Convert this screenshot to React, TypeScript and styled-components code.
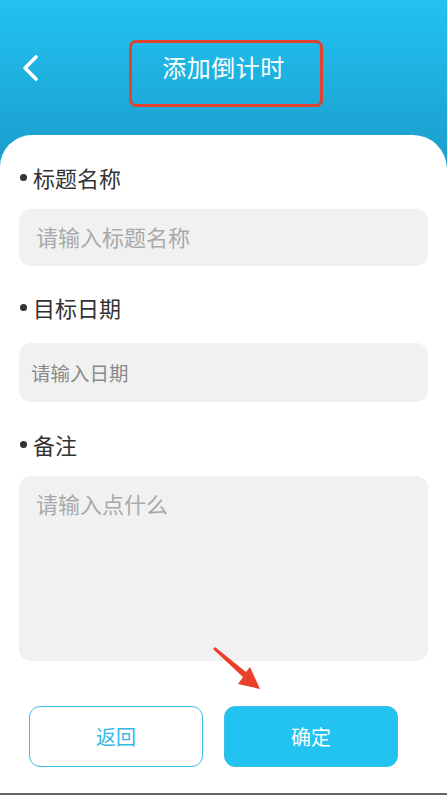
import React from "react";
import styled, { createGlobalStyle } from "styled-components";

const GlobalStyle = createGlobalStyle`
  html, body {
    margin: 0;
    padding: 0;
    background: #ffffff;
  }
  * {
    box-sizing: border-box;
  }
`;

const Page = styled.div`
  position: relative;
  width: 447px;
  height: 795px;
  overflow: hidden;
  font-family: "Noto Sans CJK SC", "Noto Sans", sans-serif;
  background: linear-gradient(180deg, #22c2f1 0px, #1a9ccb 170px, #1a9ccb 795px);
  border-bottom: 2px solid #666666;
`;

const Header = styled.div`
  position: relative;
  height: 135px;
  display: flex;
  justify-content: center;
  align-items: flex-start;
  padding-top: 40px;
`;

const BackBtn = styled.div`
  position: absolute;
  left: 20px;
  top: 52px;
  width: 24px;
  height: 32px;
  cursor: pointer;
`;

// 标题外面的红框是截图里的标注
const TitleBox = styled.div`
  width: 194px;
  height: 67px;
  margin-left: 4px;
  border: 3px solid #e2432e;
  border-radius: 7px;
  display: flex;
  align-items: center;
  justify-content: center;
  padding-bottom: 14px;
  padding-right: 4px;
  color: #ffffff;
  font-size: 24px;
  letter-spacing: 0.5px;
`;

const Card = styled.div`
  position: relative;
  height: 660px;
  background: #ffffff;
  border-radius: 32px 34px 0 0;
  padding: 30px 19px 0 19px;
`;

const Label = styled.div<{ $top?: number }>`
  display: flex;
  align-items: center;
  height: 30px;
  padding-bottom: 6px;
  margin-top: ${(p) => p.$top ?? 0}px;
  font-size: 22px;
  color: #333333;

  &::before {
    content: "";
    width: 7px;
    height: 7px;
    border-radius: 50%;
    background: #333333;
    margin-left: 1px;
    margin-right: 6px;
  }
`;

const TextInput = styled.input<{ $top: number; $pad: number; $size: number; $tone: string }>`
  display: block;
  width: 100%;
  height: ${(p) => (p.$pad === 12 ? 59 : 57)}px;
  margin-top: ${(p) => p.$top}px;
  border: none;
  outline: none;
  border-radius: 12px;
  background: #f1f1f1;
  padding: 0 0 ${(p) => (p.$pad === 12 ? 1 : 4)}px ${(p) => p.$pad}px;
  font-family: inherit;
  font-size: ${(p) => p.$size}px;
  color: #333333;

  &::placeholder {
    color: ${(p) => p.$tone};
  }
`;

const TextArea = styled.textarea`
  display: block;
  width: 100%;
  height: 185px;
  margin-top: 14px;
  border: none;
  outline: none;
  resize: none;
  border-radius: 12px;
  background: #f1f1f1;
  padding: 12px 17px;
  font-family: inherit;
  font-size: 22px;
  line-height: 30px;
  color: #333333;

  &::placeholder {
    color: #a9a9a9;
  }
`;

const ButtonRow = styled.div`
  display: flex;
  gap: 21px;
  margin-top: 45px;
  padding-left: 10px;
`;

const Button = styled.button<{ $primary?: boolean }>`
  width: 174px;
  height: 61px;
  border-radius: 11px;
  border: 1px solid #3dbfe8;
  background: ${(p) => (p.$primary ? "#22c3f1" : "#ffffff")};
  color: ${(p) => (p.$primary ? "#ffffff" : "#36b8e4")};
  font-family: inherit;
  font-size: 20px;
  cursor: pointer;
`;

const Pointer = styled.svg`
  position: absolute;
  left: 210px;
  top: 511px;
`;

const App: React.FC = () => {
  return (
    <Page>
      <GlobalStyle />
      <Header>
        <BackBtn>
          <svg width="24" height="32" viewBox="0 0 24 32">
            <polyline
              points="16,5 5,16 16,27"
              fill="none"
              stroke="#ffffff"
              strokeWidth="3.6"
              strokeLinecap="round"
              strokeLinejoin="round"
            />
          </svg>
        </BackBtn>
        <TitleBox>添加倒计时</TitleBox>
      </Header>
      <Card>
        <Label>标题名称</Label>
        <TextInput $top={14} $pad={17} $size={22} $tone="#a9a9a9" placeholder="请输入标题名称" />
        <Label $top={29}>目标日期</Label>
        <TextInput $top={18} $pad={12} $size={19.5} $tone="#8a8a8a" placeholder="请输入日期" />
        <Label $top={30}>备注</Label>
        <TextArea placeholder="请输入点什么" />
        <ButtonRow>
          <Button>返回</Button>
          <Button $primary>确定</Button>
        </ButtonRow>
        {/* 截图里的红色箭头标注 */}
        <Pointer width="54" height="45" viewBox="0 0 54 45">
          <polygon points="3,3 5,1 36,26 40,21 50,43 28,38 33,31" fill="#e8402b" />
        </Pointer>
      </Card>
    </Page>
  );
};

export default App;
